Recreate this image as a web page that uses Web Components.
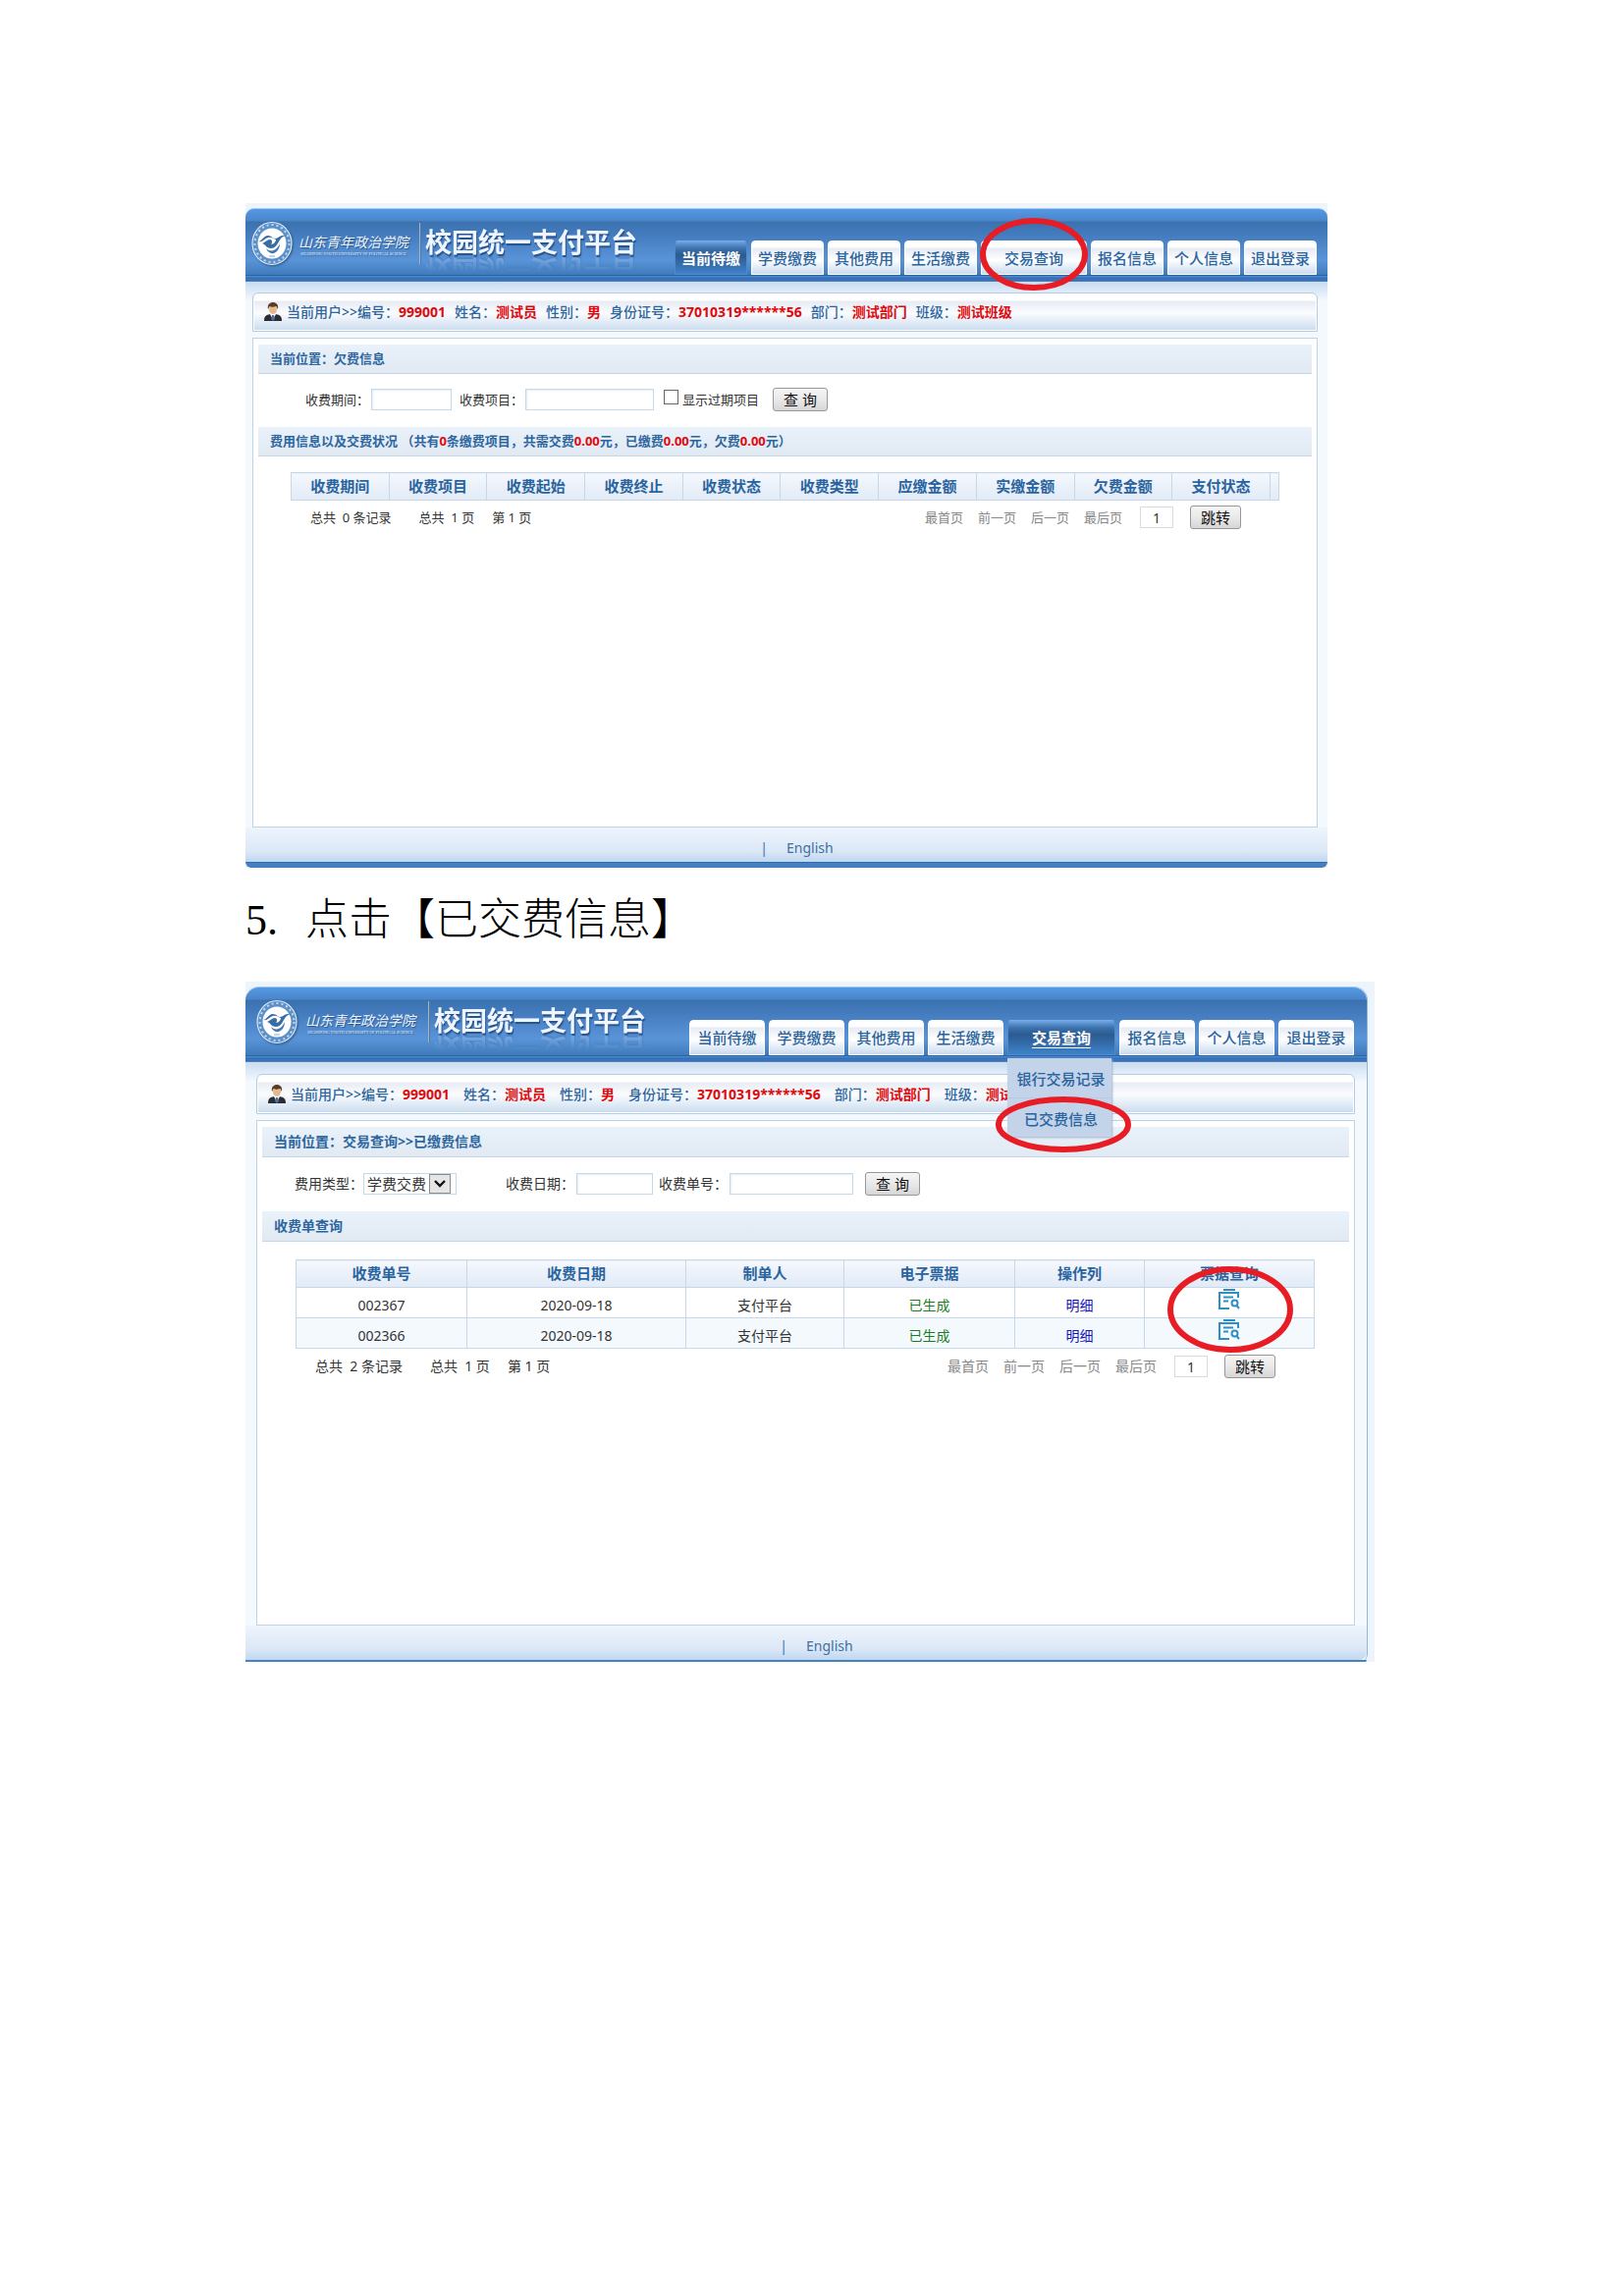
<!DOCTYPE html>
<html lang="zh-CN">
<head>
<meta charset="utf-8">
<title>校园统一支付平台</title>
<style>
    body {
        margin: 0;
        padding: 207px 254px 0 250px;
        background: #fff;
        color: #333;
        font-family: "Noto Sans", "Noto Sans CJK SC", sans-serif;
    }
</style>
</head>
<body>

<pay-portal class="first">
    <portal-brand slot="brand"></portal-brand>
    <nav-tab slot="nav" active>当前待缴</nav-tab>
    <nav-tab slot="nav">学费缴费</nav-tab>
    <nav-tab slot="nav">其他费用</nav-tab>
    <nav-tab slot="nav">生活缴费</nav-tab>
    <nav-tab slot="nav" wide>交易查询<ring-mark slot="over" w="110" h="74" dy="-4"></ring-mark></nav-tab>
    <nav-tab slot="nav">报名信息</nav-tab>
    <nav-tab slot="nav">个人信息</nav-tab>
    <nav-tab slot="nav">退出登录</nav-tab>
    <user-bar slot="user"></user-bar>

    <section-bar>当前位置：欠费信息</section-bar>
    <form-row class="debt">
        <text-field label="收费期间：" width="82"></text-field>
        <text-field label="收费项目：" width="131"></text-field>
        <check-field label="显示过期项目"></check-field>
        <push-button>查 询</push-button>
    </form-row>
    <section-bar>费用信息以及交费状况 （共有<red-num>0</red-num>条缴费项目，共需交费<red-num>0.00</red-num>元，已缴费<red-num>0.00</red-num>元，欠费<red-num>0.00</red-num>元）</section-bar>
    <debt-table></debt-table>
    <page-bar total="0"></page-bar>
</pay-portal>

<step-title no="5.">点击【已交费信息】</step-title>

<pay-portal class="second" framed>
    <portal-brand slot="brand"></portal-brand>
    <nav-tab slot="nav">当前待缴</nav-tab>
    <nav-tab slot="nav">学费缴费</nav-tab>
    <nav-tab slot="nav">其他费用</nav-tab>
    <nav-tab slot="nav">生活缴费</nav-tab>
    <nav-tab slot="nav" wide active underlined>交易查询<sub-menu slot="over"></sub-menu></nav-tab>
    <nav-tab slot="nav">报名信息</nav-tab>
    <nav-tab slot="nav">个人信息</nav-tab>
    <nav-tab slot="nav">退出登录</nav-tab>
    <user-bar slot="user"></user-bar>

    <section-bar>当前位置：交易查询&gt;&gt;已缴费信息</section-bar>
    <form-row class="paid">
        <type-field></type-field>
        <text-field label="收费日期：" width="78"></text-field>
        <text-field label="收费单号：" width="126"></text-field>
        <push-button>查 询</push-button>
    </form-row>
    <section-bar>收费单查询</section-bar>
    <paid-table></paid-table>
    <page-bar class="paid" total="2"></page-bar>
</pay-portal>

<script>
// Shared base: puts the markup of a subclass into an open shadow root
class PortalElement extends HTMLElement {
    constructor() {
        super();
        this.shadow = this.attachShadow({mode: "open"});
    }

    connectedCallback() {
        this.shadow.innerHTML = `<style>:host, * { box-sizing: border-box; }</style>` + this.render();
    }
}

class PayPortal extends PortalElement {
    render() {
        return `
            <style>
                :host {
                    --text: 13px;
                    --head: 68px;
                    --tab: 74px;
                    --wide: 108px;
                    --tab-h: 35px;
                    --school: 118px;
                    --user: 40px;
                    --user-gap: 9px;
                    --section: 30px;
                    --form: 54px;
                    --row: 28px;
                    display: block;
                    background: #edf4fc;
                    padding-top: 5px;
                    font-size: var(--text);
                    line-height: 20px;
                }
                :host(.first) {
                    margin-right: 48px;
                }
                :host([framed]) {
                    --text: 14px;
                    --head: 70px;
                    --tab: 77px;
                    --wide: 110px;
                    --tab-h: 36px;
                    --school: 122px;
                    --user: 41px;
                    --user-gap: 14px;
                    --section: 31px;
                    --form: 55px;
                    --row: 31px;
                    padding-right: 7px;
                }
                .frame {
                    border-radius: 10px 10px 6px 6px;
                    background: #f4f9fe;
                }
                :host([framed]) .frame {
                    border-right: 1px solid #8fb8da;
                    border-radius: 14px 14px 8px 0;
                }
                header {
                    display: flex;
                    justify-content: space-between;
                    align-items: flex-end;
                    height: var(--head);
                    padding: 0 11px 0 6px;
                    border-top: 1px solid #9cc8f2;
                    border-radius: 9px 9px 0 0;
                    background: linear-gradient(#5599e4 0, #4a85ca 12px, #3b72ae 13px, #4078ba 22px, #5a94d8 52px, #3f7bbb 100%);
                }
                :host([framed]) header {
                    padding: 0 13px 0 11px;
                    border-radius: 14px 14px 0 0;
                }
                nav {
                    display: flex;
                    gap: 4px;
                }
                .stripe {
                    height: 7px;
                    background: linear-gradient(#2d62a4 0 1px, #4a88cc 1px 2px, #2f6bb6 3px, #3f79c0 5px, #3265a2 6px, #6c9dcf 7px);
                }
                .main {
                    padding: 11px 10px 0 7px;
                    background: linear-gradient(#c9dcf1, #f4f9fe 20px);
                }
                :host([framed]) .main {
                    padding: 12px 12px 0 11px;
                }
                .content {
                    min-height: 499px;
                    margin-top: 6px;
                    padding: 6px 5px;
                    border: 1px solid #bfd3e6;
                    background: #fff;
                }
                :host([framed]) .content {
                    min-height: 515px;
                }
                footer {
                    display: flex;
                    justify-content: center;
                    gap: 19px;
                    height: 35px;
                    padding: 11px 0 0 21px;
                    background: linear-gradient(#eef4fc, #dbe8f7 24px, #c0d6f0);
                    color: #3f6fa5;
                    font-size: 14px;
                }
                footer a {
                    color: inherit;
                    text-decoration: none;
                }
                .foot {
                    height: 6px;
                    border-top: 1px solid #2f6cad;
                    border-radius: 0 0 6px 6px;
                    background: #467fc0;
                }
                :host([framed]) footer {
                    border-radius: 0 0 8px 0;
                }
                :host([framed]) .foot {
                    height: 2px;
                    border: 0;
                    border-radius: 0 0 8px 0;
                    background: #4583bd;
                }
            </style>
            <div class="frame">
                <header>
                    <slot name="brand"></slot>
                    <nav><slot name="nav"></slot></nav>
                </header>
                <div class="stripe"></div>
                <div class="main">
                    <slot name="user"></slot>
                    <div class="content"><slot></slot></div>
                </div>
                <footer><span>|</span><a href="#">English</a></footer>
                <div class="foot"></div>
            </div>
        `;
    }
}

class PortalBrand extends PortalElement {
    render() {
        return `
            <style>
                :host {
                    display: flex;
                    align-items: center;
                    align-self: flex-start;
                    color: #eef5ff;
                    padding-top: 12px;
                    white-space: nowrap;
                }
                svg {
                    width: 42px;
                    height: 46px;
                    margin-right: 3px;
                    filter: drop-shadow(1px 1px 1px #2a5688);
                }
                .school {
                    width: var(--school);
                    text-align: center;
                    text-shadow: 1px 1px 1px #2a5688;
                }
                .cn {
                    font: italic 14px/20px "Noto Sans CJK SC", sans-serif;
                }
                .en {
                    font: 4px/5px "Liberation Serif", serif;
                }
                .rule {
                    width: 2px;
                    height: 42px;
                    margin: 0 4px 0 8px;
                    background: #a5b3c2;
                    border-right: 1px solid #50779f;
                }
                .name {
                    font-size: 27px;
                    font-weight: bold;
                    line-height: 30px;
                    padding-bottom: 2px;
                    text-shadow: 1px 2px 1px #28518a;
                    -webkit-box-reflect: below -6px linear-gradient(transparent 40%, rgba(255, 255, 255, .25));
                }
            </style>
            <svg viewBox="0 0 42 46" fill="none" aria-hidden="true">
                <ellipse cx="21" cy="23" rx="20" ry="21.500" fill="#5d90c8" stroke="#dcebfa" stroke-width="1.200"/>
                <ellipse cx="21" cy="23" rx="17.500" ry="19" stroke="#c3d9f0" stroke-width="2" stroke-dasharray="2 3"/>
                <ellipse cx="21" cy="23" rx="14.500" ry="15.500" fill="#fff"/>
                <path d="M7 21c4 0 5-6 10-6 4 0 4 3 7 3 4 0 5-4 11-3-4 1-5 3-7 6-2 4-4 7-8 7-5 0-5-4-9-5 3-1 5-4 8-4 2 0 3 3 1 5 3 0 5-3 5-5-3-1-5-3-8-2-4 1-5 5-10 4z" fill="#376ca5"/>
                <path d="M15 28c5 5 11 2 14-5 0 7-5 11-9 10-3-1-4-3-5-5z" fill="#4279b1"/>
                <path d="M18 36h6" stroke="#8ba9c9" stroke-width="1"/>
            </svg>
            <div class="school">
                <div class="cn">山东青年政治学院</div>
                <div class="en">SHANDONG YOUTH UNIVERSITY OF POLITICAL SCIENCE</div>
            </div>
            <span class="rule"></span>
            <div class="name">校园统一支付平台</div>
        `;
    }
}

class NavTab extends PortalElement {
    render() {
        return `
            <style>
                :host {
                    display: block;
                    position: relative;
                    width: var(--tab);
                    height: var(--tab-h);
                }
                :host([wide]) {
                    width: var(--wide);
                }
                a {
                    display: flex;
                    align-items: center;
                    justify-content: center;
                    height: 100%;
                    border: 1px solid #fff;
                    border-radius: 4px 4px 0 0;
                    background: linear-gradient(#fff 0, #fdfdfe 6px, #e6ebf3 7px, #fff 19px, #c9dbef 100%);
                    color: #2a649f;
                    font-size: 15px;
                    font-weight: 500;
                    text-decoration: none;
                    white-space: nowrap;
                }
                :host([active]) a {
                    border-color: #4d8bcd;
                    border-top-color: #77abe6;
                    background: linear-gradient(#6ea5e2, #3c72ad 7px, #2c5a90 14px, #3f82ca 100%);
                    color: #fff;
                    font-weight: bold;
                }
                :host([underlined]) a {
                    text-decoration: underline;
                    text-underline-offset: 4px;
                }
            </style>
            <a href="#"><slot></slot></a>
            <slot name="over"></slot>
        `;
    }
}

class SubMenu extends PortalElement {
    render() {
        return `
            <style>
                :host {
                    display: block;
                    position: absolute;
                    z-index: 2;
                    top: 39px;
                    left: 0;
                    width: 106px;
                    box-shadow: 1px 1px 2px #9fb3cb;
                }
                .item {
                    position: relative;
                    display: flex;
                    align-items: center;
                    justify-content: center;
                    height: 40px;
                    padding: 2px 0 0 3px;
                    background: #c3d3e9;
                }
                .item + .item {
                    border-top: 1px solid #b9cae1;
                }
                a {
                    color: #2a649f;
                    font-size: 15px;
                    font-weight: 500;
                    text-decoration: none;
                    white-space: nowrap;
                }
            </style>
            <div class="item"><a href="#">银行交易记录</a></div>
            <div class="item"><a href="#">已交费信息</a><ring-mark w="138" h="57" dx="4" dy="6"></ring-mark></div>
        `;
    }
}

// Red oval drawn around the middle of its positioned parent, dx and dy move it from there
class RingMark extends PortalElement {
    render() {
        const w = +this.getAttribute('w');
        const h = +this.getAttribute('h');
        const dx = +this.getAttribute('dx');
        const dy = +this.getAttribute('dy');
        return `
            <style>
                :host {
                    display: block;
                    position: absolute;
                    z-index: 3;
                    left: 50%;
                    top: 50%;
                    width: ${w}px;
                    height: ${h}px;
                    margin: ${dy - Math.floor(h / 2)}px 0 0 ${dx - w / 2}px;
                    pointer-events: none;
                }
                svg {
                    display: block;
                }
            </style>
            <svg width="${w}" height="${h}" aria-hidden="true">
                <ellipse cx="${w / 2}" cy="${h / 2}" rx="${w / 2 - 3}" ry="${h / 2 - 3}" fill="none" stroke="#e71c24" stroke-width="6"/>
            </svg>
        `;
    }
}

class UserBar extends PortalElement {
    render() {
        const items = [['编号', '999001'], ['姓名', '测试员'], ['性别', '男'], ['身份证号', '37010319******56'], ['部门', '测试部门'], ['班级', '测试班级']];
        return `
            <style>
                :host {
                    display: flex;
                    align-items: center;
                    gap: var(--user-gap);
                    height: var(--user);
                    padding-left: 10px;
                    border: 1px solid #b4cce4;
                    border-radius: 6px 6px 0 0;
                    box-shadow: inset 0 0 0 1px #fff;
                    background: linear-gradient(#fff 0 7px, #e7ecf4 8px, #fbfcfe 20px, #c9dbee 100%);
                    color: #2d669f;
                    font-size: 14px;
                    font-weight: 500;
                    white-space: nowrap;
                    overflow: hidden;
                }
                .who {
                    display: flex;
                    align-items: center;
                }
                svg {
                    width: 20px;
                    height: 20px;
                    margin-right: 4px;
                }
                b {
                    color: #e0080c;
                    font-weight: bold;
                }
            </style>
            ${items.map((it, i) => `<span class="who">${i ? '' : `
                <svg viewBox="0 0 20 20" aria-hidden="true">
                    <path d="M1 19c0-5 2-6 6-7h6c4 1 6 2 6 7z" fill="#2a2d33"/>
                    <path d="M7 12l3 6 3-6z" fill="#fff"/>
                    <path d="M9 13h2l1 4-2 2-2-2z" fill="#4b6f9c"/>
                    <ellipse cx="10" cy="7" rx="4" ry="5" fill="#e3b98a"/>
                    <path d="M5 7c-1-5 2-7 5-7s6 2 5 7c-1-1-1-3-2-3-2 1-5 1-6 0-1 0-1 2-2 3z" fill="#5b3d26"/>
                </svg>当前用户&gt;&gt;`}${it[0]}：<b>${it[1]}</b></span>`).join('')}
        `;
    }
}

class SectionBar extends PortalElement {
    render() {
        return `
            <style>
                :host {
                    display: block;
                    height: var(--section);
                    padding-left: 12px;
                    border-bottom: 1px solid #c6d6e8;
                    background: linear-gradient(#e9f1fb, #e1e9f3);
                    color: #2d669f;
                    font-weight: bold;
                    line-height: calc(var(--section) - 2px);
                    white-space: nowrap;
                }
            </style>
            <slot></slot>
        `;
    }
}

class RedNum extends PortalElement {
    render() {
        return `<style>:host { display: inline; color: #e0080c; font-weight: bold; }</style><slot></slot>`;
    }
}

class FormRow extends PortalElement {
    render() {
        return `
            <style>
                :host {
                    display: flex;
                    align-items: center;
                    height: var(--form);
                    gap: 8px;
                    padding: 0 0 2px 48px;
                }
                :host(.paid) {
                    gap: 6px;
                    padding-left: 33px;
                }
            </style>
            <slot></slot>
        `;
    }
}

class TextField extends PortalElement {
    render() {
        return `
            <style>
                :host {
                    display: flex;
                    align-items: center;
                    white-space: nowrap;
                }
                input {
                    width: ${this.getAttribute('width')}px;
                    height: 22px;
                    margin: 0 0 0 2px;
                    padding: 0 4px;
                    border: 1px solid #c5d8e8;
                    background: #fff;
                    box-shadow: inset 1px 1px 2px #e4edf6;
                }
            </style>
            <label for="f">${this.getAttribute('label')}</label><input id="f" type="text">
        `;
    }
}

class TypeField extends PortalElement {
    render() {
        return `
            <style>
                :host {
                    display: flex;
                    align-items: center;
                    margin-right: 44px;
                    white-space: nowrap;
                }
                .box {
                    position: relative;
                    display: flex;
                    border: 1px solid #c5d8e8;
                    padding-right: 5px;
                }
                select {
                    appearance: none;
                    width: 88px;
                    height: 20px;
                    padding: 0 0 0 3px;
                    border: 0;
                    border-radius: 0;
                    background: #fff;
                    color: #333;
                    font: 15px/20px "Noto Sans CJK SC", sans-serif;
                }
                svg {
                    position: absolute;
                    right: 5px;
                    top: 0;
                    pointer-events: none;
                }
            </style>
            <label for="t">费用类型：</label>
            <div class="box">
                <select id="t"><option>学费交费</option></select>
                <svg width="22" height="20" viewBox="0 0 22 20" aria-hidden="true">
                    <rect x=".5" y=".5" width="21" height="19" fill="#e5e5e5" stroke="#8b8b8b"/>
                    <path d="M6 7l5 5 5-5" fill="none" stroke="#111" stroke-width="2.400"/>
                </svg>
            </div>
        `;
    }
}

class CheckField extends PortalElement {
    render() {
        return `
            <style>
                :host {
                    display: flex;
                    margin-left: 2px;
                    white-space: nowrap;
                }
                input {
                    appearance: none;
                    width: 15px;
                    height: 15px;
                    margin: 0 4px 0 0;
                    border: 1px solid #666;
                    background: #fff;
                }
            </style>
            <input id="c" type="checkbox"><label for="c">${this.getAttribute('label')}</label>
        `;
    }
}

class PushButton extends PortalElement {
    render() {
        return `
            <style>
                :host {
                    display: block;
                    margin-left: 6px;
                }
                button {
                    display: block;
                    height: 24px;
                    min-width: 52px;
                    padding: 0 10px;
                    border: 1px solid #979797;
                    border-radius: 3px;
                    background: linear-gradient(#f5f5f5, #e9e9e9 50%, #d6d6d6);
                    color: #111;
                    font: 15px/20px "Noto Sans", "Noto Sans CJK SC", sans-serif;
                    white-space: nowrap;
                }
            </style>
            <button type="button"><slot></slot></button>
        `;
    }
}

const TABLE_CSS = `
    :host {
        display: block;
        margin: 16px 33px 0 33px;
    }
    table {
        width: 100%;
        table-layout: fixed;
        border-collapse: collapse;
    }
    th, td {
        height: var(--row);
        padding: 0;
        border: 1px solid #c5d7e8;
        text-align: center;
        white-space: nowrap;
        font-weight: 400;
    }
    th {
        height: 28px;
        padding-bottom: 2px;
        background: linear-gradient(#f5f8fd, #e1eaf6);
        color: #2a649f;
        font-size: 15px;
        font-weight: bold;
    }
    td {
        padding-top: 5px;
    }
    tr:nth-child(even) td {
        background: #f4f9fe;
    }
`;

class DebtTable extends PortalElement {
    render() {
        const heads = ['收费期间', '收费项目', '收费起始', '收费终止', '收费状态', '收费类型', '应缴金额', '实缴金额', '欠费金额', '支付状态'];
        return `
            <style>
                ${TABLE_CSS}
                .end { width: 9px; }
            </style>
            <table>
                <thead><tr>${heads.map(h => `<th>${h}</th>`).join('')}<th class="end"></th></tr></thead>
            </table>
        `;
    }
}

class PaidTable extends PortalElement {
    render() {
        const icon = `
            <svg width="22" height="21" viewBox="0 0 22 21" fill="none" stroke="#2f8fc4" stroke-width="2">
                <path d="M5 1h12M11 20H1V4h19v5"/>
                <path d="M5 8.500h10M5 12.500h5"/>
                <circle cx="16.500" cy="14.500" r="3"/>
                <path d="M18.500 17l2.500 3"/>
            </svg>`;
        return `
            <style>
                ${TABLE_CSS}
                :host { margin: 18px 35px 0 34px; }
                .ok { color: #1b7d1f; }
                td a { color: #1313b8; text-decoration: none; }
                td:last-child { padding-top: 1px; vertical-align: top; }
                .look { position: relative; display: flex; justify-content: center; }
                svg { display: block; }
            </style>
            <table>
                <colgroup>
                    <col style="width:174px"><col style="width:223px"><col style="width:161px">
                    <col style="width:174px"><col style="width:132px"><col>
                </colgroup>
                <thead>
                    <tr><th>收费单号</th><th>收费日期</th><th>制单人</th><th>电子票据</th><th>操作列</th><th>票据查询</th></tr>
                </thead>
                <tbody>
                    ${['002367', '002366'].map((no, i) => `
                    <tr>
                        <td>${no}</td><td>2020-09-18</td><td>支付平台</td>
                        <td class="ok">已生成</td><td><a href="#">明细</a></td>
                        <td><div class="look"><a href="#" aria-label="票据查询">${icon}</a>${i ? '' : '<ring-mark w="128" h="88" dx="1" dy="10"></ring-mark>'}</div></td>
                    </tr>`).join('')}
                </tbody>
            </table>
        `;
    }
}

class PageBar extends PortalElement {
    render() {
        return `
            <style>
                :host {
                    display: flex;
                    justify-content: space-between;
                    align-items: center;
                    height: 34px;
                    margin: 0 72px 0 53px;
                    white-space: nowrap;
                }
                :host(.paid) {
                    height: 36px;
                    margin: 0 75px 0 54px;
                }
                .count, .links {
                    display: flex;
                    align-items: center;
                }
                .count {
                    white-space: pre;
                    gap: 18px;
                }
                .count span:first-child {
                    margin-right: 10px;
                }
                .links {
                    gap: 15px;
                }
                .links a {
                    color: #888;
                    text-decoration: none;
                }
                input {
                    width: 34px;
                    height: 22px;
                    margin: 0 -4px 0 3px;
                    padding: 0;
                    border: 1px solid #d5dbe0;
                    color: #333;
                    font: 14px "Noto Sans", sans-serif;
                    text-align: center;
                }
            </style>
            <div class="count"><span>总共  ${this.getAttribute('total')} 条记录</span><span>总共  1 页</span><span>第 1 页</span></div>
            <div class="links">
                <a href="#">最首页</a><a href="#">前一页</a><a href="#">后一页</a><a href="#">最后页</a>
                <input type="text" value="1" aria-label="页码">
                <push-button>跳转</push-button>
            </div>
        `;
    }
}

class StepTitle extends PortalElement {
    render() {
        return `
            <style>
                :host {
                    display: flex;
                    gap: 28px;
                    height: 116px;
                    align-items: baseline;
                    padding-top: 24px;
                    color: #000;
                    font: 300 44px/50px "Noto Sans CJK SC", sans-serif;
                }
                .no {
                    font: 44px/50px "Liberation Serif", serif;
                }
            </style>
            <span class="no">${this.getAttribute('no')}</span><span><slot></slot></span>
        `;
    }
}

customElements.define('pay-portal', PayPortal)
customElements.define('portal-brand', PortalBrand)
customElements.define('nav-tab', NavTab)
customElements.define('sub-menu', SubMenu)
customElements.define('ring-mark', RingMark)
customElements.define('user-bar', UserBar)
customElements.define('section-bar', SectionBar)
customElements.define('red-num', RedNum)
customElements.define('form-row', FormRow)
customElements.define('text-field', TextField)
customElements.define('type-field', TypeField)
customElements.define('check-field', CheckField)
customElements.define('push-button', PushButton)
customElements.define('debt-table', DebtTable)
customElements.define('paid-table', PaidTable)
customElements.define('page-bar', PageBar)
customElements.define('step-title', StepTitle)
</script>
</body>
</html>
